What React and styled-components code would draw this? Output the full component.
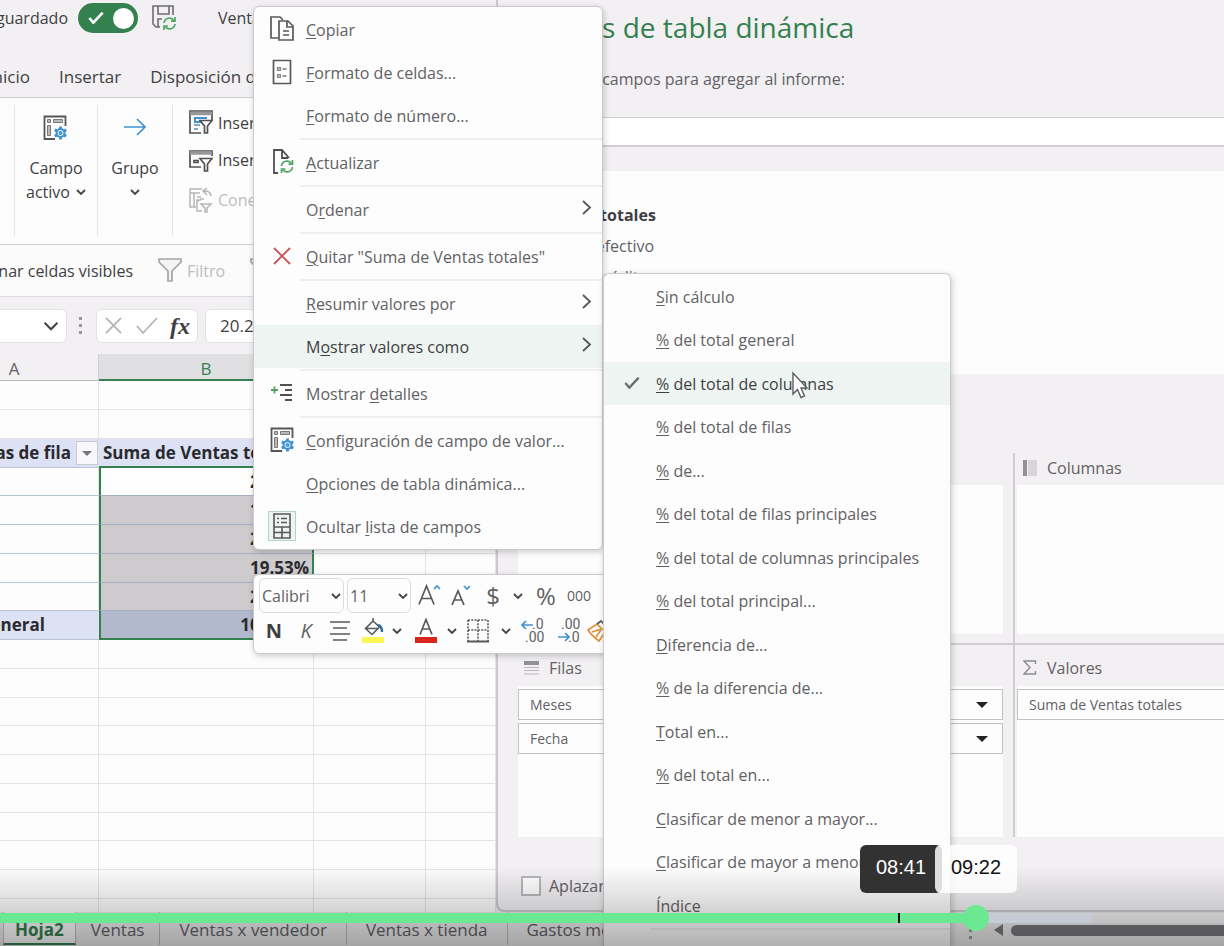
import React from "react";
import styled, { createGlobalStyle, css } from "styled-components";

const color = {
  chrome: "#f2f0f3",
  line: "#d0ced1",
  grid: "#e4e3e5",
  green: "#34804f",
  ink: "#3f3f42",
  text: "#626164",
  hover: "#edf4f1",
  pivot: "#dce2f3",
  blue: "#3f92d2",
  accent: "#6ce892",
};

const GlobalStyle = createGlobalStyle`
  *, *::before, *::after { box-sizing: border-box; }
  body { margin: 0; overflow: hidden; }
  body, button, input, select {
    font-family: "Open Sans", "Noto Sans", sans-serif;
    font-size: 16px;
    line-height: 24px;
    color: ${color.ink};
  }
  button { border: 0; padding: 0; background: none; white-space: nowrap; }
  svg { display: block; flex: none; }
`;

/* ---------- shell ---------- */

const Stage = styled.main`
  position: relative;
  display: flex;
  flex-direction: column;
  height: 100vh;
  overflow: hidden;
  background: ${color.chrome};
`;

const Workspace = styled.div`
  flex: 1;
  min-height: 0;
  display: grid;
  grid-template-columns: minmax(0, 62fr) minmax(0, 91fr);
`;

const Workbook = styled.section`
  display: flex;
  flex-direction: column;
  min-height: 0;
  overflow: hidden;
  white-space: nowrap;
  background: #fdfdfe;
  > * { flex: none; }
`;

const TitleBar = styled.header`
  display: flex;
  align-items: center;
  height: 36px;
  background: ${color.chrome};
`;

const Clipped = styled.span`
  display: flex;
  justify-content: flex-end;
  overflow: hidden;
  flex: none;
  width: ${(p) => p.$width}px;
`;

const SwitchLabel = styled.label`
  display: flex;
  align-items: center;
`;

const SwitchInput = styled.input`
  appearance: none;
  position: absolute;
  margin: 0;
  width: 0;
  height: 0;
`;

const SwitchTrack = styled.span`
  display: flex;
  align-items: center;
  justify-content: space-between;
  width: 60px;
  height: 30px;
  margin-left: 10px;
  padding: 0 4px 0 10px;
  border-radius: 15px;
  background: ${color.green};
`;

const SwitchKnob = styled.span`
  width: 21px;
  height: 21px;
  border-radius: 50%;
  background: #fff;
`;

const SaveButton = styled.button`
  margin: 0 42px 0 14px;
`;

const RibbonTabs = styled.nav`
  display: flex;
  gap: 29px;
  height: 62px;
  padding-top: 20px;
  background: ${color.chrome};
  border-bottom: 1px solid ${color.line};
  font-size: 17px;
`;

const RibbonTab = styled.button`
  height: 42px;
  font-size: 17px;
`;

const Ribbon = styled.div`
  display: flex;
  height: 147px;
  padding: 7px 0 8px;
  border-bottom: 1px solid ${color.line};
`;

const RibbonGroup = styled.div`
  display: flex;
  flex-direction: column;
  align-items: center;
  flex: none;
  width: ${(p) => p.$width}px;
  border-right: 1px solid ${color.grid};
`;

const BigButton = styled.button`
  display: grid;
  grid-template-rows: 51px 24px 24px;
  justify-items: center;
  align-items: center;
  > svg:first-child { align-self: start; margin-top: 10px; }
`;

const CaretLine = styled.span`
  display: flex;
  align-items: center;
  gap: 6px;
`;

const FilterCommands = styled.div`
  display: flex;
  flex-direction: column;
  padding-left: 16px;
`;

const FilterCommand = styled.button`
  display: flex;
  align-items: center;
  gap: 5px;
  height: 40px;
  &:first-child { height: 35px; }
  &:disabled { color: #bdbcbe; }
`;

const QuickBar = styled.div`
  display: flex;
  align-items: center;
  height: 52px;
  border-bottom: 1px solid #dddbde;
  background: #fbfbfb;
`;

const QuickButton = styled.button`
  display: flex;
  align-items: center;
  gap: 5px;
  margin-left: 25px;
  color: #bdbcbe;
`;

const FormulaBar = styled.div`
  display: flex;
  align-items: center;
  height: 57px;
  background: ${color.chrome};
`;

const FieldBox = styled.div`
  display: flex;
  align-items: center;
  justify-content: space-between;
  flex: none;
  height: 34px;
  padding: 0 7px;
  border: 1px solid #e3e1e4;
  border-radius: 6px;
  background: #fff;
`;

const NameBox = styled(FieldBox)`
  width: 67px;
  justify-content: flex-end;
  border-left: 0;
  border-radius: 0 6px 6px 0;
`;

const Dots = styled.span`
  display: grid;
  gap: 4px;
  margin: 0 12px;
  padding-right: 2px;
  &::before, &::after, i { content: ""; width: 3px; height: 3px; background: #98979a; }
  i { display: block; }
`;

const FunctionBox = styled(FieldBox)`
  width: 102px;
  margin-right: 7px;
`;

const FxLabel = styled.button`
  font-family: "Liberation Serif", serif;
  font-style: italic;
  font-weight: bold;
  font-size: 24px;
`;

const FormulaInput = styled.input`
  flex: 1;
  min-width: 0;
  height: 34px;
  padding: 0 14px;
  border: 1px solid #e3e1e4;
  border-radius: 6px;
  background: #fff;
  font-size: 17px;
`;

/* ---------- spreadsheet ---------- */

const Sheet = styled.table`
  width: 100%;
  table-layout: fixed;
  border-collapse: separate;
  border-spacing: 0;
  font-size: 17px;
  font-weight: 700;
  color: #2a2a2e;
  line-height: 20px;

  tbody tr { height: 29px; }
  tbody tr:nth-child(4n) { height: 28px; }
`;

const Col = styled.col`
  width: ${(p) => p.$width}px;
`;

const ColumnHead = styled.th`
  height: 27px;
  padding: 4px ${(p) => (p.$first ? 70 : 0)}px 0 0;
  font-weight: 400;
  color: ${(p) => (p.$active ? color.green : color.text)};
  background: ${(p) => (p.$active ? "#e0dfe1" : color.chrome)};
  border-right: 1px solid ${color.line};
  border-bottom: ${(p) => (p.$active ? `2px solid ${color.green}` : `1px solid #bcbabd`)};
`;

const Cell = styled.td`
  height: inherit;
  padding: 0 4px;
  border-right: 1px solid ${color.grid};
  border-bottom: 1px solid ${color.grid};
  ${(p) => p.$head && css`background: ${color.pivot}; border-color: ${color.pivot}; border-bottom-color: #b9c4dc;`}
  ${(p) => p.$body && css`border-bottom-color: #b9c4dc;`}
  ${(p) => p.$aboveRange && css`border-bottom: 2px solid ${color.green};`}
  ${(p) =>
    p.$selected &&
    css`
      text-align: right;
      padding: 0 3px;
      background: ${p.$selected === "active" ? "#fefefe" : p.$selected === "total" ? "#b3b9cd" : "#cdcbce"};
      border-left: 2px solid ${color.green};
      border-right: 2px solid ${color.green};
      border-bottom: ${p.$selected === "total" ? `2px solid ${color.green}` : "1px solid #a3aec2"};
    `}
`;

const LeftCut = styled.div`
  display: flex;
  justify-content: flex-end;
  align-items: center;
  height: 26px;
  margin: 0 -4px;
  padding-right: ${(p) => p.$end || 0}px;
  gap: 5px;
  overflow: hidden;
`;

const FilterButton = styled.button`
  display: grid;
  place-items: center;
  flex: none;
  width: 22px;
  height: 24px;
  border: 1px solid #c9cbd3;
  background: #f8f8fa;
`;

/* ---------- field pane ---------- */

const Pane = styled.aside`
  display: flex;
  flex-direction: column;
  min-height: 0;
  overflow: hidden;
  white-space: nowrap;
  padding-left: 20px;
  border: 2px solid #cbc9cc;
  border-width: 0 0 2px 2px;
  border-bottom-left-radius: 8px;
  background: ${color.chrome};
`;

const PaneTitle = styled.h1`
  margin: 0 0 0 -9px;
  padding-top: 9px;
  font-size: 28px;
  line-height: 36px;
  font-weight: 400;
  color: ${color.green};
`;

const PaneHint = styled.p`
  margin: 22px 0 26px -5px;
  color: ${color.text};
`;

const SearchField = styled.input`
  height: 30px;
  flex: none;
  border: 2px solid ${color.line};
  border-width: 1px 0 2px 1px;
  background: #fff;
`;

const FieldList = styled.div`
  flex: none;
  height: 203px;
  margin-top: 24px;
  padding-top: 28px;
  background: #fdfdfe;
`;

const FieldOption = styled.label`
  display: flex;
  align-items: center;
  gap: 7px;
  height: 31px;
  color: ${color.text};
  font-weight: ${(p) => (p.$checked ? 700 : 400)};
  ${(p) => p.$checked && `color: ${color.ink};`}
`;

const Tick = styled.input`
  appearance: none;
  flex: none;
  width: ${(p) => p.$size || 16}px;
  height: ${(p) => p.$size || 16}px;
  margin: 0;
  border: 2px solid #b9b7ba;
  background: #fff;
`;

const DropAreas = styled.div`
  display: grid;
  grid-template-columns: minmax(0, 495fr) minmax(0, 211fr);
  grid-template-rows: 192px 192px;
  margin-top: 79px;
`;

const Area = styled.section`
  display: flex;
  flex-direction: column;
  padding: 0 ${(p) => (p.$side === "left" ? 10 : 0)}px ${(p) => (p.$row === "top" ? 9 : 0)}px ${(p) => (p.$side === "left" ? 0 : 2)}px;
  border-left: ${(p) => (p.$side === "left" ? "0" : `2px solid ${color.line}`)};
  border-bottom: ${(p) => (p.$row === "top" ? `2px solid ${color.line}` : "0")};
`;

const AreaTitle = styled.h2`
  display: flex;
  align-items: center;
  gap: 10px;
  flex: none;
  height: ${(p) => (p.$row === "top" ? 32 : 41)}px;
  margin: 0;
  padding: ${(p) => (p.$row === "top" ? "0 0 3px 6px" : "4px 0 0 6px")};
  font-size: 16px;
  font-weight: 400;
  color: ${color.text};
`;

const AreaBody = styled.div`
  flex: 1;
  display: flex;
  flex-direction: column;
  gap: 3px;
  padding-top: 3px;
  background: #fdfdfe;
`;

const FieldChip = styled.button`
  display: flex;
  align-items: center;
  justify-content: space-between;
  height: 31px;
  padding: 0 14px 0 11px;
  border: 1px solid #c3c1c4;
  border-right-width: ${(p) => (p.$open ? 0 : 1)}px;
  font-size: 14px;
  color: ${color.text};
  background: #fdfdfe;
`;

const DeferLabel = styled.label`
  display: flex;
  align-items: center;
  gap: 8px;
  margin-top: 37px;
  padding-left: 3px;
  color: ${color.text};
`;

/* ---------- sheet tabs ---------- */

const SheetBar = styled.footer`
  display: flex;
  align-items: flex-start;
  flex: none;
  height: 34px;
  padding-left: 3px;
  background: #ebeaec;
`;

const SheetTab = styled.button`
  height: 33px;
  padding: 3px ${(p) => p.$pad}px 0;
  font-size: 17px;
  color: ${color.text};
  border-right: 1px solid #bbb9bc;
  ${(p) =>
    p.$active &&
    css`
      padding-top: 5px;
      font-weight: 700;
      color: ${color.green};
      background: #fbfbfc;
      border-left: 1px solid #c5c3c6;
      border-bottom: 2px solid ${color.green};
    `}
`;

const ScrollArea = styled.div`
  display: flex;
  align-items: center;
  gap: 8px;
  margin-left: auto;
  flex: 0 0 267px;
  height: 36px;
`;

const ScrollThumb = styled.div`
  flex: 1;
  height: 11px;
  border-radius: 6px 0 0 6px;
  background: #78777a;
`;

/* ---------- floating menus ---------- */

const Popup = styled.div`
  position: absolute;
  left: ${(p) => p.$left}px;
  top: ${(p) => p.$top}px;
  width: ${(p) => p.$width}px;
  padding: 1px 0;
  border: 1px solid #cccacd;
  border-radius: 6px;
  background: #fdfdfd;
  box-shadow: 1px 2px 6px rgba(0, 0, 0, 0.2);
`;

const SubPopup = styled(Popup)`
  bottom: 0;
  overflow: hidden;
  border-bottom: 0;
  border-radius: 6px 6px 0 0;
`;

const MenuItem = styled.button`
  display: grid;
  grid-template-columns: 52px 1fr auto;
  align-items: center;
  width: 100%;
  height: 43px;
  padding-right: 10px;
  text-align: left;
  color: ${(p) => (p.$active ? color.ink : color.text)};
  background: ${(p) => (p.$active ? color.hover : "transparent")};
  ${SubPopup} &:nth-child(even) { height: 44px; }
  u { text-underline-offset: 2px; text-decoration-thickness: 1px; }
`;

const IconSlot = styled.span`
  display: grid;
  place-items: center;
  padding: 0 0 2px 4px;
`;

const Framed = styled.span`
  display: grid;
  place-items: center;
  width: 28px;
  height: 30px;
  border: 1px solid #b5d3c5;
  background: ${color.hover};
`;

const Separator = styled.hr`
  height: 2px;
  margin: 1px 0 1px 46px;
  border: 0;
  background: #f0eff0;
`;

const MiniToolbar = styled(Popup)`
  display: flex;
  flex-direction: column;
  height: 80px;
  padding: 2px 5px;
  overflow: hidden;
`;

const ToolRow = styled.div`
  display: flex;
  align-items: center;
  height: ${(p) => p.$height}px;
`;

const SelectBox = styled.label`
  display: grid;
  align-items: center;
  flex: none;
  width: ${(p) => p.$width}px;
  height: 35px;
  margin-right: 3px;
  border: 1px solid #dddbde;
  border-radius: 6px;
  svg { grid-area: 1 / 1; justify-self: end; margin-right: 2px; pointer-events: none; }
`;

const Select = styled.select`
  grid-area: 1 / 1;
  appearance: none;
  width: 100%;
  height: 33px;
  padding: 0 2px;
  border: 0;
  background: none;
  color: ${color.text};
`;

const Tool = styled.button`
  display: grid;
  place-items: center;
  flex: none;
  width: ${(p) => p.$width}px;
  height: 30px;
  font-size: ${(p) => p.$size || 20}px;
  font-weight: ${(p) => (p.$bold ? 700 : 400)};
  font-style: ${(p) => (p.$italic ? "italic" : "normal")};
  color: ${(p) => (p.$bold ? color.ink : color.text)};
`;

const Pointer = styled.div`
  position: absolute;
  left: 791px;
  top: 371px;
`;

/* ---------- video player ---------- */

const Player = styled.div`
  position: absolute;
  inset: auto 0 0 0;
  height: 80px;
  background: linear-gradient(rgba(0, 0, 0, 0), rgba(0, 0, 0, 0.13) 45%, rgba(0, 0, 0, 0.3));
`;

const Track = styled.div`
  position: absolute;
  inset: auto 0 23px 0;
  display: flex;
  align-items: center;
  height: 10px;
  background: rgba(255, 255, 255, 0.12);
`;

const Played = styled.div`
  flex: 0 0 79.7%;
  height: 10px;
  background: ${color.accent};
`;

const Buffered = styled.div`
  flex: 0 0 9.5%;
  height: 10px;
  background: #c6cbd6;
`;

const Knob = styled.div`
  position: absolute;
  left: 79.7%;
  width: 26px;
  height: 26px;
  margin-left: -13px;
  border-radius: 50%;
  background: ${color.accent};
`;

const HoverMark = styled.div`
  position: absolute;
  left: 73.4%;
  width: 2px;
  height: 10px;
  background: #111;
`;

const TimeLabels = styled.div`
  position: absolute;
  left: 860px;
  bottom: 53px;
  display: flex;
`;

const TimeLabel = styled.span`
  width: 82px;
  height: 48px;
  padding: 0 16px;
  border-radius: 6px;
  font: 20px/44px "Liberation Sans", Arial, sans-serif;
  color: ${(p) => (p.$light ? "#111" : "#fff")};
  background: ${(p) => (p.$light ? "rgba(255, 255, 255, 0.84)" : "#323232")};
  margin-left: ${(p) => (p.$light ? -7 : 0)}px;
`;

/* ---------- icons ---------- */

const Caret = ({ size = 10, stroke = "#444", width = 1.8 }) => (
  <svg width={size} height={size} viewBox="0 0 10 10" fill="none" stroke={stroke} strokeWidth={width}>
    <path d="M1 3l4 4 4-4" />
  </svg>
);

const ChevronRight = () => (
  <svg width="11" height="20" viewBox="0 0 11 20" fill="none" stroke="#58575a" strokeWidth="1.8">
    <path d="M2 1l7 6.500L2 14" />
  </svg>
);

const Triangle = ({ fill = "#222", w = 12 }) => (
  <svg width={w} height={w / 2} viewBox="0 0 12 6"><path d="M0 0h12L6 6z" fill={fill} /></svg>
);

const RefreshMark = ({ x, y }) => (
  <g transform={`translate(${x} ${y})`} fill="none" stroke="#4fa563" strokeWidth="1.7">
    <path d="M1 6a5.5 5.5 0 0 1 10-2.500M12 7a5.500 5.500 0 0 1-10 2.500" />
    <path d="M12 0v4.200H8M1 13V9h4" />
  </g>
);

const SaveIcon = () => (
  <svg width="24" height="26" viewBox="0 0 24 26" fill="none" stroke="#6d6c6f" strokeWidth="1.6">
    <path d="M8 22H4l-3-3V1h20v9M6 1v8h11V1M6 22v-8h4" />
    <RefreshMark x={11} y={12} />
  </svg>
);

const CopyIcon = () => (
  <svg width="24" height="26" viewBox="0 0 24 26" fill="none" stroke="#59585b" strokeWidth="1.7">
    <path d="M8 22H1V1h9l3 3" />
    <path d="M9 5h9l5 5v14H9zM17 5v6h6M13 15h6M13 19h6" />
  </svg>
);

const FormatCellsIcon = () => (
  <svg width="20" height="26" viewBox="0 0 20 26" fill="none" stroke="#59585b" strokeWidth="1.7">
    <path d="M1.500 1.500h17v23h-17z" />
    <path d="M5.500 8.500h3v3h-3zM5.500 15.500h3v3h-3z" fill="#bbb" stroke="#88878a" strokeWidth="1.200" />
    <path d="M10.500 10h4M10.500 17h4" stroke="#77767a" strokeWidth="1.300" />
  </svg>
);

const RefreshPageIcon = () => (
  <svg width="24" height="26" viewBox="0 0 24 26" fill="none" stroke="#504f52" strokeWidth="1.8">
    <path d="M8 24H4V1h8l7 8M12 1v8h6" />
    <RefreshMark x={10.5} y={11} />
  </svg>
);

const RemoveIcon = ({ stroke = "#c65458", size = 20 }) => (
  <svg width={size} height={size} viewBox="0 0 20 20" fill="none" stroke={stroke} strokeWidth="1.8">
    <path d="M2 2l16 16M18 2L2 18" />
  </svg>
);

const DetailsIcon = () => (
  <svg width="22" height="20" viewBox="0 0 22 20" fill="none" strokeWidth="1.8">
    <path d="M0 7h7M3.500 3.500v7" stroke="#4fa563" />
    <path d="M9 2h12M14 7h7M9 12h12M14 17h7" stroke="#504f52" />
  </svg>
);

const FieldSettingsIcon = () => (
  <svg width="25" height="26" viewBox="0 0 25 26" fill="none">
    <path d="M12 24H1.500V1.500h21V11" stroke="#565558" strokeWidth="1.800" />
    <path d="M4.500 4.500h3v3h-3zM4.500 10.500h3v10h-3z" fill="#bab9bc" stroke="#777" />
    <path d="M10.500 4.500h9v3h-9z" fill="#bab9bc" stroke="#777" />
    <g stroke={color.blue}>
      <circle cx="17.500" cy="18" r="4" strokeWidth="2" fill="#d8ebf8" />
      <path d="M17.500 11.500v3M17.500 21.500v3M11.800 14.800l2.600 1.500M20.600 19.700l2.600 1.500M23.200 14.800l-2.600 1.500M14.400 19.700l-2.600 1.500" strokeWidth="2.800" />
      <circle cx="17.500" cy="18" r="1.200" strokeWidth="1.500" />
    </g>
  </svg>
);

const FieldListIcon = () => (
  <svg width="18" height="26" viewBox="0 0 18 26" fill="none" stroke="#59585b" strokeWidth="1.600">
    <path d="M1 1h16v24H1zM1 14h16M1 19.500h16M9 14v11" />
    <path d="M4 5.500h2M8 5.500h6M4 9.500h2M8 9.500h6" strokeWidth="1.300" />
  </svg>
);

const ArrowRight = () => (
  <svg width="22" height="24" viewBox="0 0 22 24" fill="none" stroke={color.blue} strokeWidth="1.700">
    <path d="M0 12h21M13 4l8 8-8 8" />
  </svg>
);

const SlicerIcon = ({ timeline }) => (
  <svg width="24" height="25" viewBox="0 0 24 25" fill="none" stroke="#504f52" strokeWidth="1.700">
    <path d={timeline ? "M12 19H1V3h22v5" : "M12 23H1V1h22v9"} />
    <path d={timeline ? "M1 5h22" : "M1 3.500h22"} stroke="#98979a" strokeWidth="3.500" />
    {timeline ? (
      <path d="M5 12.500h4v2H5z" />
    ) : (
      <g stroke={color.blue} strokeWidth="2"><path d="M18 8H6v4h6" /><path d="M5 15h6M5 19h4" stroke="#7fa9c9" /></g>
    )}
    <path d="M11 10.500h12l-4.500 5.500v7h-3v-7z" fill="#fff" />
  </svg>
);

const ConnectionsIcon = () => (
  <svg width="24" height="25" viewBox="0 0 24 25" fill="none" stroke="#b5b4b7" strokeWidth="1.500">
    <path d="M7 19H1V1h12M1 5h10M5 5v14M8 9h4M8 13h2M12 12h-4v11h5" />
    <path d="M22 8c0-4-3-5-7-5M18 0l-4 3 4 4M11 11h4M12 16h10l-4 4v4h-2v-4z" />
  </svg>
);

const FunnelIcon = () => (
  <svg width="24" height="25" viewBox="0 0 24 25" fill="#f4f4f5" stroke="#a4a3a6" strokeWidth="1.700">
    <path d="M1 1h22v3l-9 9v10h-4V13L1 4z" />
  </svg>
);

const CheckIcon = ({ w = 24, stroke = "#b3b2b5", width = 1.7 }) => (
  <svg width={w} height={w * 0.75} viewBox="0 0 24 18" fill="none" stroke={stroke} strokeWidth={width}>
    <path d="M2 9l6 7L22 1" />
  </svg>
);

const PointerIcon = () => (
  <svg width="18" height="28" viewBox="0 0 18 28" fill="#fff" stroke="#5d5c5f" strokeWidth="1.400">
    <path d="M2 2v21l4.500-4.500 3.500 8 3.500-1.500-3.500-8h6z" />
  </svg>
);

const GrowFont = ({ small }) => (
  <svg width="24" height="26" viewBox="0 0 24 26" fill="none" stroke="#59585b" strokeWidth="1.700">
    <path d={small ? "M2 22L8 8l6 14M4.500 17h7" : "M1 21.500L8.500 3 16 21.500M4 15.500h9"} />
    <path d={small ? "M14 3l3 3 3-3" : "M16 6l3-3 3 3"} stroke={color.blue} />
  </svg>
);

const AlignIcon = () => (
  <svg width="20" height="22" viewBox="0 0 20 22" stroke="#59585b" strokeWidth="1.600">
    <path d="M0 2h20M3 8h14M0 14h20M3 20h14" />
  </svg>
);

const FillIcon = () => (
  <svg width="24" height="26" viewBox="0 0 24 26" fill="none" stroke="#59585b" strokeWidth="1.600">
    <path d="M12 3l-7.500 7.500 6.500 6 7.500-7.500L12 3V0M5 10.500h12" />
    <path d="M17 7c3 1 4 3 4 7" stroke="#2f6fa8" strokeWidth="2.400" />
    <path d="M1 19h22v6H1z" fill="#f9f551" stroke="none" />
  </svg>
);

const FontColorIcon = () => (
  <svg width="24" height="26" viewBox="0 0 24 26" fill="none" stroke="#59585b" strokeWidth="1.700">
    <path d="M6 16.500l6-15 6 15M8.500 11h7" />
    <path d="M1 19h22v6H1z" fill="#d8261f" stroke="none" />
  </svg>
);

const BordersIcon = () => (
  <svg width="22" height="24" viewBox="0 0 22 24" fill="none" stroke="#59585b" strokeWidth="1.600">
    <path d="M1 1h20M1 1v21M21 1v21M11 1v21M1 11h20" strokeDasharray="2 1.300" />
    <path d="M0 22.500h22" strokeWidth="2" />
  </svg>
);

const DecimalIcon = ({ less }) => (
  <svg width="24" height="26" viewBox="0 0 24 26" fill="none">
    <g fontFamily="Roboto, sans-serif" fontSize="14" fill="#626164">
      <text x={less ? 4 : 11} y="11">{less ? ".00" : ".0"}</text>
      <text x={less ? 11 : 4} y="24">{less ? ".0" : ".00"}</text>
    </g>
    <path d={less ? "M1 19h11M8 15l4 4-4 4" : "M12 7H1M5 3L1 7l4 4"} stroke={color.blue} strokeWidth="1.700" />
  </svg>
);

const BrushIcon = () => (
  <svg width="24" height="22" viewBox="0 0 24 22" fill="none" strokeWidth="1.700">
    <path d="M1 10l9-6 8 8-6 9C8 18 4 15 1 10zM5 12l9-3M9 17l5-7" stroke="#e0913a" />
    <path d="M10 4l4-3 8 8-4 3" stroke="#59585b" />
  </svg>
);

const RowsIcon = () => (
  <svg width="15" height="14" viewBox="0 0 15 14"><path d="M0 0h15v4H0z" fill="#929194" /><path d="M0 6.500h15M0 9.500h15M0 13h15" stroke="#bbb9bc" /></svg>
);
const ColumnsIcon = () => (
  <svg width="14" height="16" viewBox="0 0 14 16"><path d="M0 0h4v16H0z" fill="#929194" /><path d="M5 0h9v16H5z" fill="#d7d5d8" /></svg>
);
const SigmaIcon = () => (
  <svg width="14" height="15" viewBox="0 0 14 15" fill="none" stroke="#8c8b8e" strokeWidth="1.400"><path d="M12.500 4V1H1l6 6.500L1 14h11.500v-3" /></svg>
);

/* ---------- data ---------- */

const contextMenu = [
  { id: "copy", icon: <CopyIcon />, label: <><u>C</u>opiar</> },
  { id: "cells", icon: <FormatCellsIcon />, label: <><u>F</u>ormato de celdas...</> },
  { id: "number", label: <><u>F</u>ormato de número...</> },
  { id: "s1", separator: true },
  { id: "refresh", icon: <RefreshPageIcon />, label: <><u>A</u>ctualizar</> },
  { id: "s2", separator: true },
  { id: "sort", label: <>O<u>r</u>denar</>, more: true },
  { id: "s3", separator: true },
  { id: "remove", icon: <RemoveIcon />, label: <><u>Q</u>uitar "Suma de Ventas totales"</> },
  { id: "s4", separator: true },
  { id: "summarize", label: <><u>R</u>esumir valores por</>, more: true },
  { id: "show", label: <>M<u>o</u>strar valores como</>, more: true, active: true },
  { id: "s5", separator: true },
  { id: "details", icon: <DetailsIcon />, label: <>Mostrar <u>d</u>etalles</> },
  { id: "s6", separator: true },
  { id: "settings", icon: <FieldSettingsIcon />, label: <><u>C</u>onfiguración de campo de valor...</> },
  { id: "options", label: <><u>O</u>pciones de tabla dinámica...</> },
  { id: "hide", icon: <Framed><FieldListIcon /></Framed>, label: <>Ocultar <u>l</u>ista de campos</> },
];

const showAsMenu = [
  ["S", "in cálculo"],
  ["%", " del total general"],
  ["%", " del total de columnas", true],
  ["%", " del total de filas"],
  ["%", " de..."],
  ["%", " del total de filas principales"],
  ["%", " del total de columnas principales"],
  ["%", " del total principal..."],
  ["D", "iferencia de..."],
  ["%", " de la diferencia de..."],
  ["T", "otal en..."],
  ["%", " del total en..."],
  ["C", "lasificar de menor a mayor..."],
  ["C", "lasificar de mayor a menor..."],
  ["Í", "ndice"],
];

const pivotRows = ["20.26%", "18.94%", "20.71%", "19.53%", "20.56%"];
const emptyRows = Array.from({ length: 10 }, (_, i) => i);

/* ---------- sections ---------- */

function Grid() {
  return (
    <Sheet>
      <colgroup><Col $width={99} /><Col $width={215} /><Col $width={112} /><col /></colgroup>
      <thead>
        <tr>
          <ColumnHead $first>A</ColumnHead>
          <ColumnHead $active>B</ColumnHead>
          <ColumnHead>C</ColumnHead>
          <ColumnHead>D</ColumnHead>
        </tr>
      </thead>
      <tbody>
        <tr><Cell /><Cell /><Cell /><Cell /></tr>
        <tr><Cell /><Cell /><Cell /><Cell /></tr>
        <tr>
          <Cell $head>
            <LeftCut>
              Etiquetas de fila
              <FilterButton aria-label="Filtrar etiquetas de fila"><Triangle w={10} fill="#77767a" /></FilterButton>
            </LeftCut>
          </Cell>
          <Cell $head $aboveRange>Suma de Ventas totales</Cell>
          <Cell /><Cell />
        </tr>
        {pivotRows.map((value, i) => (
          <tr key={value}>
            <Cell $body />
            <Cell $selected={i === 0 ? "active" : "range"}>{value}</Cell>
            <Cell /><Cell />
          </tr>
        ))}
        <tr>
          <Cell $head><LeftCut $end={53}>Total general</LeftCut></Cell>
          <Cell $selected="total">100.00%</Cell>
          <Cell /><Cell />
        </tr>
        {emptyRows.map((n) => <tr key={n}><Cell /><Cell /><Cell /><Cell /></tr>)}
      </tbody>
    </Sheet>
  );
}

function ExcelWorkbook() {
  return (
    <Workbook>
      <TitleBar>
        <SwitchLabel>
          <Clipped $width={68}>Autoguardado</Clipped>
          <SwitchInput type="checkbox" defaultChecked />
          <SwitchTrack><CheckIcon w={16} stroke="#fff" width={4} /><SwitchKnob /></SwitchTrack>
        </SwitchLabel>
        <SaveButton aria-label="Guardar"><SaveIcon /></SaveButton>
        <span>Ventas</span>
      </TitleBar>
      <RibbonTabs>
        <Clipped $width={30}><RibbonTab>Inicio</RibbonTab></Clipped>
        <RibbonTab>Insertar</RibbonTab>
        <RibbonTab>Disposición de página</RibbonTab>
      </RibbonTabs>
      <Ribbon>
        <RibbonGroup $width={15} />
        <RibbonGroup $width={83}>
          <BigButton>
            <FieldSettingsIcon />
            <span>Campo</span>
            <CaretLine>activo <Caret /></CaretLine>
          </BigButton>
        </RibbonGroup>
        <RibbonGroup $width={75}>
          <BigButton><ArrowRight /><span>Grupo</span><Caret /></BigButton>
        </RibbonGroup>
        <FilterCommands>
          <FilterCommand><SlicerIcon />Insertar Segmentación</FilterCommand>
          <FilterCommand><SlicerIcon timeline />Insertar escala</FilterCommand>
          <FilterCommand disabled><ConnectionsIcon />Conexiones de filtro</FilterCommand>
        </FilterCommands>
      </Ribbon>
      <QuickBar>
        <Clipped $width={133}>Seleccionar celdas visibles</Clipped>
        <QuickButton disabled><FunnelIcon />Filtro</QuickButton>
        <QuickButton disabled><FunnelIcon />Borrar</QuickButton>
      </QuickBar>
      <FormulaBar>
        <NameBox><Caret size={16} width={1.3} /></NameBox>
        <Dots><i /></Dots>
        <FunctionBox>
          <RemoveIcon stroke="#b3b2b5" size={19} />
          <CheckIcon />
          <FxLabel>fx</FxLabel>
        </FunctionBox>
        <FormulaInput aria-label="Barra de fórmulas" defaultValue="20.26%" />
      </FormulaBar>
      <Grid />
    </Workbook>
  );
}

function FieldPane() {
  return (
    <Pane>
      <PaneTitle>Campos de tabla dinámica</PaneTitle>
      <PaneHint>Seleccionar campos para agregar al informe:</PaneHint>
      <SearchField aria-label="Buscar" />
      <FieldList>
        <FieldOption $checked><Tick type="checkbox" defaultChecked />Ventas totales</FieldOption>
        <FieldOption><Tick type="checkbox" />Ventas efectivo</FieldOption>
        <FieldOption><Tick type="checkbox" />Ventas crédito</FieldOption>
      </FieldList>
      <DropAreas>
        <Area $side="left" $row="top">
          <AreaTitle $row="top">Filtros</AreaTitle>
          <AreaBody />
        </Area>
        <Area $side="right" $row="top">
          <AreaTitle $row="top"><ColumnsIcon />Columnas</AreaTitle>
          <AreaBody />
        </Area>
        <Area $side="left">
          <AreaTitle><RowsIcon />Filas</AreaTitle>
          <AreaBody>
            <FieldChip>Meses<Triangle /></FieldChip>
            <FieldChip>Fecha<Triangle /></FieldChip>
          </AreaBody>
        </Area>
        <Area $side="right">
          <AreaTitle><SigmaIcon />Valores</AreaTitle>
          <AreaBody><FieldChip $open>Suma de Ventas totales</FieldChip></AreaBody>
        </Area>
      </DropAreas>
      <DeferLabel><Tick type="checkbox" $size={20} />Aplazar actualización del diseño</DeferLabel>
    </Pane>
  );
}

function FormatToolbar() {
  return (
    <MiniToolbar $left={253} $top={574} $width={430}>
      <ToolRow $height={37}>
        <SelectBox $width={85}>
          <Select aria-label="Fuente" defaultValue="Calibri"><option>Calibri</option></Select>
          <Caret />
        </SelectBox>
        <SelectBox $width={64}>
          <Select aria-label="Tamaño" defaultValue="11"><option>11</option></Select>
          <Caret />
        </SelectBox>
        <Tool $width={32} aria-label="Aumentar fuente"><GrowFont /></Tool>
        <Tool $width={32} aria-label="Disminuir fuente"><GrowFont small /></Tool>
        <Tool $width={30} $size={24}>$</Tool>
        <Tool $width={20} aria-label="Monedas"><Caret /></Tool>
        <Tool $width={36} $size={24}>%</Tool>
        <Tool $width={30} $size={14}>000</Tool>
      </ToolRow>
      <ToolRow $height={34}>
        <Tool $width={30} $bold>N</Tool>
        <Tool $width={34} $italic>K</Tool>
        <Tool $width={34} aria-label="Centrar"><AlignIcon /></Tool>
        <Tool $width={32} aria-label="Relleno"><FillIcon /></Tool>
        <Tool $width={16} aria-label="Más rellenos"><Caret /></Tool>
        <Tool $width={42} aria-label="Color de fuente"><FontColorIcon /></Tool>
        <Tool $width={8} aria-label="Más colores"><Caret /></Tool>
        <Tool $width={46} aria-label="Bordes"><BordersIcon /></Tool>
        <Tool $width={8} aria-label="Más bordes"><Caret /></Tool>
        <Tool $width={48} aria-label="Aumentar decimales"><DecimalIcon /></Tool>
        <Tool $width={20} aria-label="Disminuir decimales"><DecimalIcon less /></Tool>
        <Tool $width={44} aria-label="Copiar formato"><BrushIcon /></Tool>
      </ToolRow>
    </MiniToolbar>
  );
}

export default function App() {
  return (
    <Stage>
      <GlobalStyle />
      <Workspace>
        <ExcelWorkbook />
        <FieldPane />
      </Workspace>
      <SheetBar>
        <SheetTab $active $pad={11}>Hoja2</SheetTab>
        <SheetTab $pad={15}>Ventas</SheetTab>
        <SheetTab $pad={19}>Ventas x vendedor</SheetTab>
        <SheetTab $pad={19}>Ventas x tienda</SheetTab>
        <SheetTab $pad={19}>Gastos mensuales</SheetTab>
        <ScrollArea>
          <Dots><i /></Dots>
          <svg width="9" height="12" viewBox="0 0 9 12"><path d="M9 0v12L0 6z" fill="#78777a" /></svg>
          <ScrollThumb />
        </ScrollArea>
      </SheetBar>

      <FormatToolbar />

      <Popup role="menu" $left={253} $top={6} $width={350}>
        {contextMenu.map((item) =>
          item.separator ? (
            <Separator key={item.id} />
          ) : (
            <MenuItem key={item.id} role="menuitem" $active={item.active}>
              <IconSlot>{item.icon}</IconSlot>
              <span>{item.label}</span>
              {item.more && <ChevronRight />}
            </MenuItem>
          )
        )}
      </Popup>

      <SubPopup role="menu" $left={603} $top={273} $width={348}>
        {showAsMenu.map(([key, rest, chosen]) => (
          <MenuItem key={key + rest} role="menuitem" $active={chosen}>
            <IconSlot>{chosen && <CheckIcon w={16} stroke="#6d6c6f" width={3.5} />}</IconSlot>
            <span><u>{key}</u>{rest}</span>
          </MenuItem>
        ))}
        <Separator />
      </SubPopup>

      <Pointer><PointerIcon /></Pointer>

      <Player>
        <TimeLabels>
          <TimeLabel>08:41</TimeLabel>
          <TimeLabel $light>09:22</TimeLabel>
        </TimeLabels>
        <Track>
          <Played />
          <Buffered />
          <HoverMark />
          <Knob />
        </Track>
      </Player>
    </Stage>
  );
}
